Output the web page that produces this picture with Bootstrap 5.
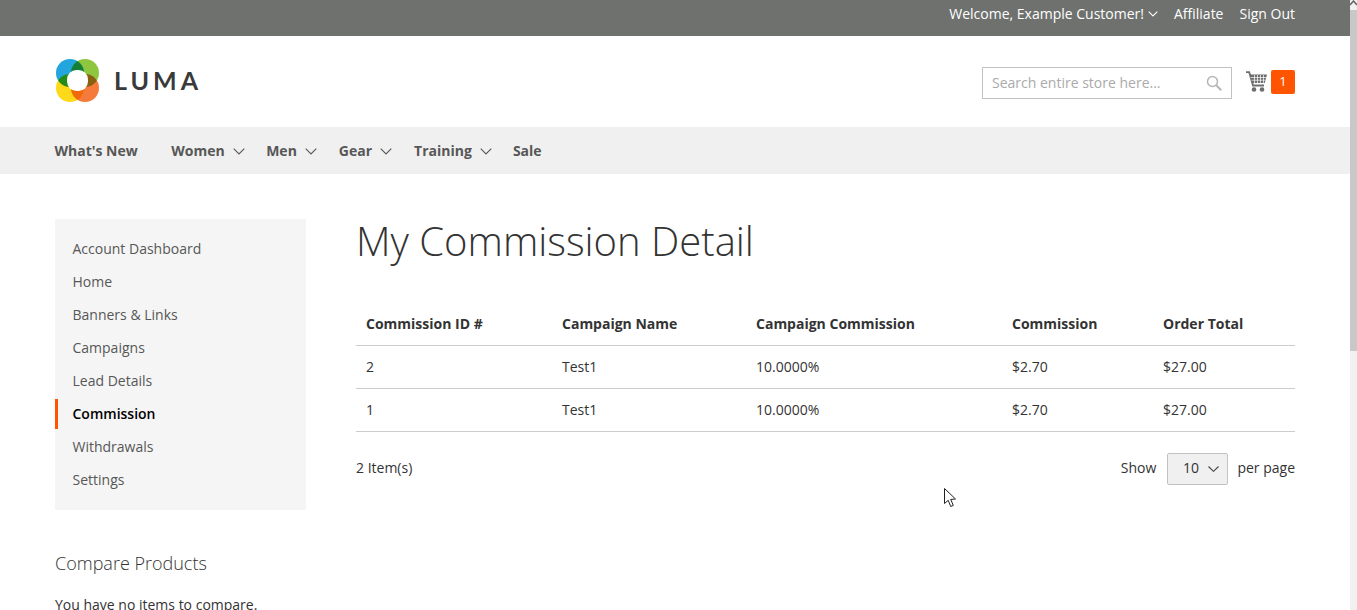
<!DOCTYPE html>
<html lang="en"><head><meta charset="utf-8"><title>My Commission Detail</title>
<link href="https://cdn.jsdelivr.net/npm/bootstrap@5.3.0/dist/css/bootstrap.min.css" rel="stylesheet">
<style>
html,body{height:610px;overflow:hidden}
body{font-family:"Open Sans",sans-serif;font-size:14px;color:#333;background:#fff;line-height:1.43}
a{color:inherit;text-decoration:none}
.page{width:1350px;height:610px;overflow:hidden}
.sb{width:7px;height:610px;background:#f1f1f1;position:fixed;right:0;top:0}
.sb i{display:block;background:#c8c8c8;height:341px;margin-top:10px}
.sb svg{position:absolute;left:0;top:0}
.topbar{height:36px;background:#6e716e;color:#fff;padding:0 55px 7px 0}
.hdr{height:91px;padding:0 55px}
.logo{isolation:isolate;margin-top:-3px}
.logo circle.c{mix-blend-mode:multiply}
.logo-t{font-family:"Lato",sans-serif;font-size:25px;letter-spacing:4px;color:#3a3a3a;font-weight:700;margin:-3px 0 0 14px;line-height:1}
.search{width:250px;height:32px;border:1px solid #c2c2c2;color:#aaa;padding:0 9px;font-size:14px;margin-top:3px}
.cart{margin:0 4px 0 14px}
.badge-c{width:24px;height:24px;background:#ff5501;color:#fff;border-radius:2px;font-size:13px}
.nav-b{height:47px;background:#f0f0f0;padding:2px 55px 0 54.5px;font-weight:700;color:#575757}
.nav-b a{margin-right:22px}
.nav-b a:first-child{margin-right:33.5px}
.nav-b a:nth-child(2){margin-right:21.5px}
.nav-b a:nth-child(5){margin-right:21px}
.nav-b a svg{margin-left:8px}
.main{padding:45px 55px 0;gap:50px}
.side{width:251px;flex:none}
.side-box{background:#f5f5f5;padding:15px 0;height:291px}
.side-box div{height:33px;padding:0 0 0 17.5px;line-height:30px;color:#575757}
.side-box .on{color:#000;font-weight:600;border-left:3px solid #ff5501;padding-left:14.5px;height:30px;margin-bottom:3px}
.cmp{font-size:18px;font-weight:300;margin-top:40px;line-height:26px;color:#333}
.note{margin-top:19px}
.h1x{font-size:40px;font-weight:300;line-height:46px;margin:-1px 0 0}
.content{flex:1;min-width:0}
table.tb{width:939px;margin-top:38px;table-layout:fixed;color:#333}
.tb th{font-weight:700;padding:12px 10px 10px;border-bottom:1px solid #ccc;line-height:20px;height:43px}
.tb td{padding:11px 10px;border-bottom:1px solid #ccc;line-height:20px;height:43px}
.foot{width:939px;margin-top:21px}
.foot .items{margin-top:-1px}
.pick{width:61px;height:32px;background:#f0f0f0;border:1px solid #c2c2c2;border-radius:2px;margin:0 9.5px 0 10.5px;padding-left:15px}
.pick svg{margin-left:9px}
.cur{position:fixed;left:944px;top:488px}
</style></head><body>
<div class="page">
<div class="topbar d-flex justify-content-end align-items-center">
<span class="d-flex align-items-center">Welcome, Example Customer!<svg class="ms-1" width="10" height="6" viewBox="0 0 10 6"><path d="M.7.7 5 5 9.3.7" fill="none" stroke="#fff" stroke-width="1.1"/></svg></span>
<a href="#" class="ms-3">Affiliate</a><a href="#" class="ms-3">Sign Out</a>
</div>
<div class="hdr d-flex align-items-center justify-content-between">
<div class="d-flex align-items-center">
<svg class="logo" width="45" height="45" viewBox="0 0 45 45"><circle class="c" cx="15" cy="15" r="14" fill="#23a5dd"/><circle class="c" cx="30" cy="15" r="14" fill="#8ec63f"/><circle class="c" cx="15" cy="30" r="14" fill="#fdd91a"/><circle class="c" cx="30" cy="30" r="14" fill="#f47b3c"/><rect x="12" y="12" width="21" height="21" rx="9.500" fill="#fff"/></svg>
<span class="logo-t">LUMA</span>
</div>
<div class="d-flex align-items-center">
<div class="search d-flex align-items-center justify-content-between"><span>Search entire store here...</span><svg width="16" height="16" viewBox="0 0 16 16"><circle cx="6.500" cy="6.500" r="5" fill="none" stroke="#b5b5b5" stroke-width="1.500"/><path d="m10.200 10.200 5 5" stroke="#b5b5b5" stroke-width="2"/></svg></div>
<svg class="cart" width="21" height="21" viewBox="0 0 21 21"><path d="M0 1.200h3.200L7 14.500h11" fill="none" stroke="#6d6d6d" stroke-width="1.800"/><path d="M4 3.500h17l-2.200 8.500H6.300z" fill="#6d6d6d"/><path d="M4.500 6.500h16M5.500 9.200h14M8.500 4v8M11.500 4v8M14.500 4v8M17.500 4v8" stroke="#fff" stroke-width=".7"/><circle cx="8" cy="18.500" r="2.300" fill="#6d6d6d"/><circle cx="16" cy="18.500" r="2.300" fill="#6d6d6d"/></svg>
<span class="badge-c d-flex align-items-center justify-content-center">1</span>
</div>
</div>
<div class="nav-b d-flex align-items-center">
<a href="#">What's New</a>
<a href="#" class="d-flex align-items-center">Women<svg width="12" height="7" viewBox="0 0 12 7"><path d="M.7.7 6 6 11.300.7" fill="none" stroke="#575757" stroke-width="1.100"/></svg></a>
<a href="#" class="d-flex align-items-center">Men<svg width="12" height="7" viewBox="0 0 12 7"><path d="M.7.7 6 6 11.300.7" fill="none" stroke="#575757" stroke-width="1.100"/></svg></a>
<a href="#" class="d-flex align-items-center">Gear<svg width="12" height="7" viewBox="0 0 12 7"><path d="M.7.7 6 6 11.300.7" fill="none" stroke="#575757" stroke-width="1.100"/></svg></a>
<a href="#" class="d-flex align-items-center">Training<svg width="12" height="7" viewBox="0 0 12 7"><path d="M.7.7 6 6 11.300.7" fill="none" stroke="#575757" stroke-width="1.100"/></svg></a>
<a href="#">Sale</a>
</div>
<div class="main d-flex">
<div class="side">
<div class="side-box"><div>Account Dashboard</div><div>Home</div><div>Banners &amp; Links</div><div>Campaigns</div><div>Lead Details</div><div class="on">Commission</div><div>Withdrawals</div><div>Settings</div></div>
<div class="cmp">Compare Products</div>
<div class="note">You have no items to compare.</div>
</div>
<div class="content">
<h1 class="h1x">My Commission Detail</h1>
<table class="tb"><colgroup><col style="width:196px"><col style="width:194px"><col style="width:256px"><col style="width:151px"><col></colgroup>
<thead><tr><th>Commission ID #</th><th>Campaign Name</th><th>Campaign Commission</th><th>Commission</th><th>Order Total</th></tr></thead>
<tbody><tr><td>2</td><td>Test1</td><td>10.0000%</td><td>$2.70</td><td>$27.00</td></tr><tr><td>1</td><td>Test1</td><td>10.0000%</td><td>$2.70</td><td>$27.00</td></tr></tbody></table>
<div class="foot d-flex justify-content-between align-items-center">
<span class="items">2 Item(s)</span>
<span class="d-flex align-items-center">Show<span class="pick d-flex align-items-center">10<svg width="11" height="6" viewBox="0 0 11 6"><path d="M.5.5 5.500 5.300 10.500.5" fill="none" stroke="#444" stroke-width="1.100"/></svg></span>per page</span>
</div>
</div>
</div>
</div>
<div class="sb"><svg width="7" height="6" viewBox="0 0 7 6"><path d="M0 5 3.500 1 7 5" fill="none" stroke="#666" stroke-width="1.500"/></svg><i></i></div>
<svg class="cur" width="13" height="20" viewBox="0 0 13 20"><path d="M.5.5v15l3.700-3.200 2.500 6.200 2.600-1.100-2.600-6 4.800-.4z" fill="#fff" stroke="#222"/></svg>
<script src="https://cdn.jsdelivr.net/npm/bootstrap@5.3.0/dist/js/bootstrap.bundle.min.js"></script>
</body></html>
